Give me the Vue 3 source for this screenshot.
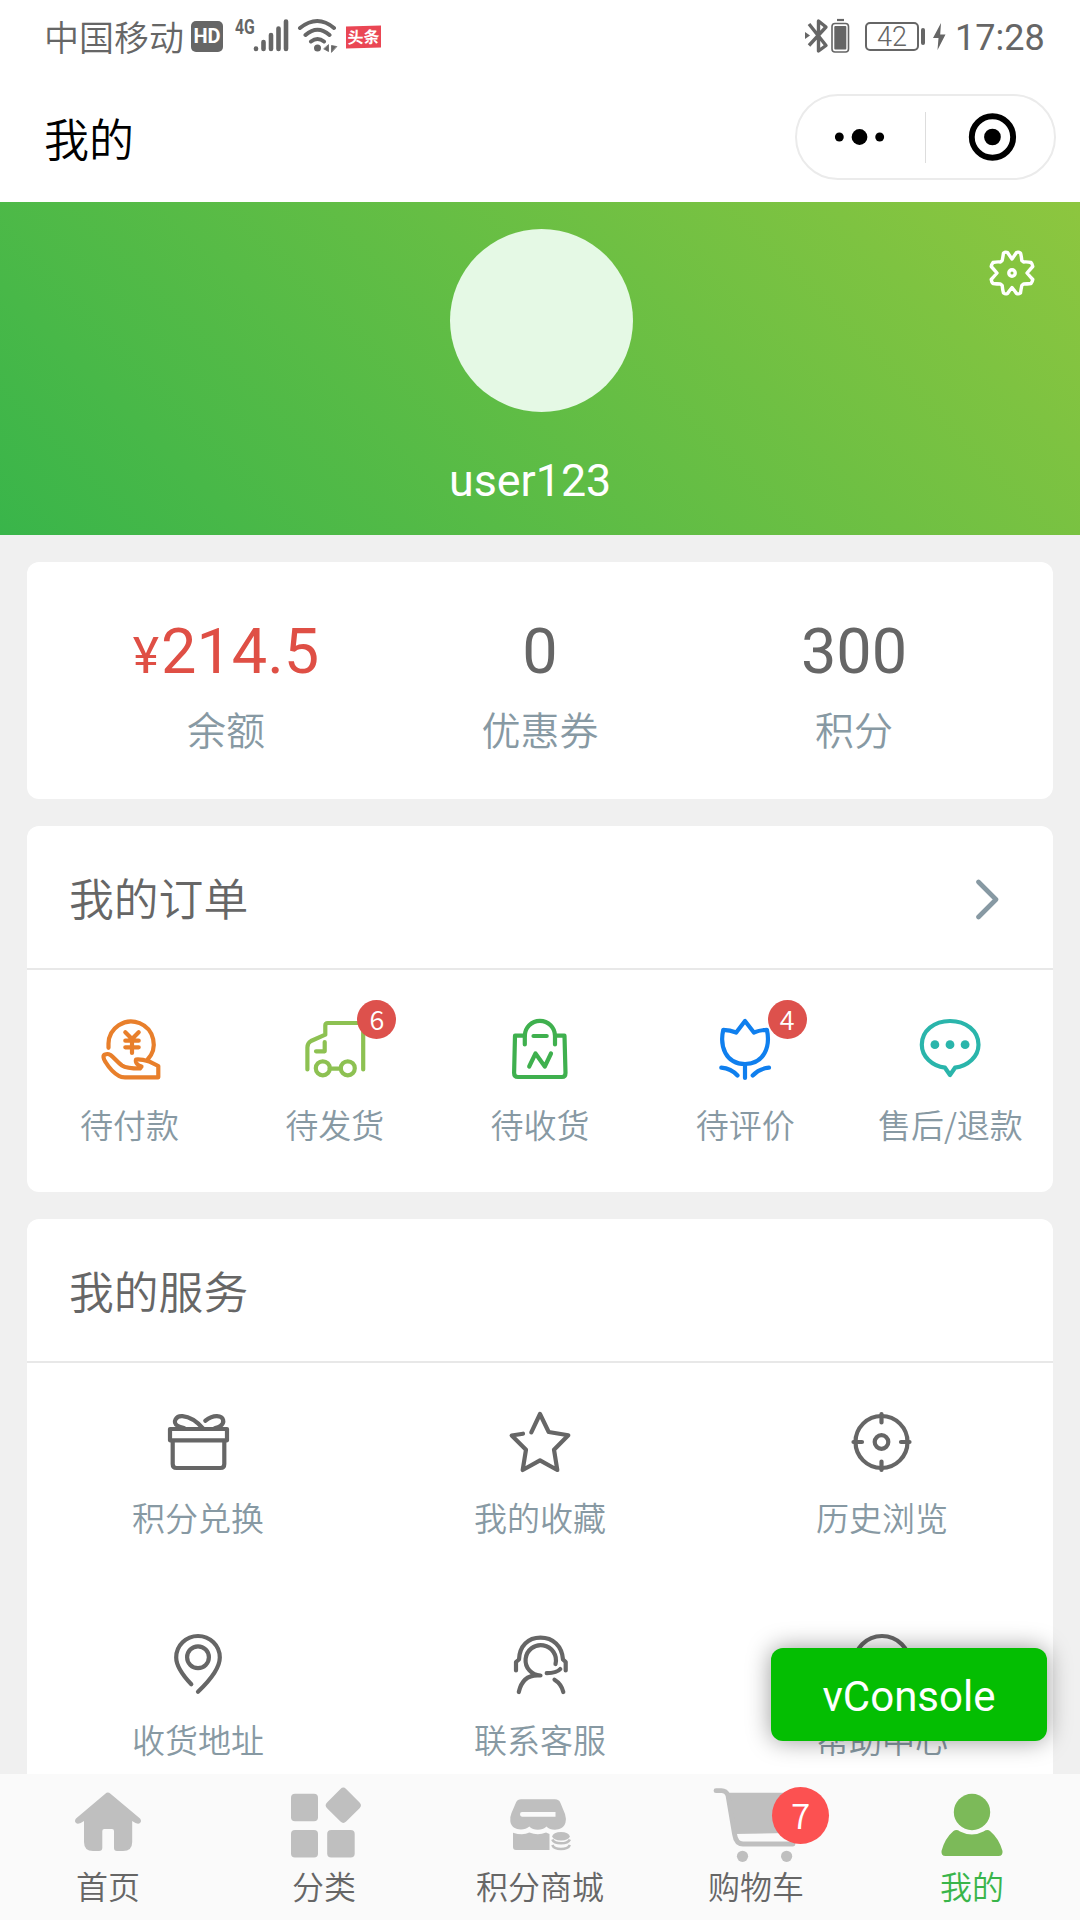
<script setup>
const stats = [
  { prefix: '¥', value: '214.5', label: '余额', red: true },
  { value: '0', label: '优惠券' },
  { value: '300', label: '积分' },
]

const orders = [
  {
    label: '待付款',
    color: '#e87f2b',
    paths: [
      'M14.5 34.8V30.6A22.6 22.6 0 1 1 53.6 46.5',
      'M31.3 19.3L38 26L44.7 19.3M31.3 27.7H44.7M31.3 34.3H44.7M38 26V40',
      'M11 41.6C8.500 42.500 9.500 46 11.500 49C15.500 55.500 20.500 60.500 25 63C27 64.300 28.500 64.300 31 64.300H64.300V53L56 48.800C50 47 45 46 42 46.600C41 50 44.500 52.500 47.500 53.500L46 55.500C38 55.500 31 54.500 28 52.500C23 49 20 44.500 16.500 42C14.500 40.800 12.500 40.800 11 41.600Z',
    ],
  },
  {
    label: '待发货',
    color: '#8dc152',
    badge: 6,
    paths: [
      'M8.400 56.500V34.500Q8.400 30 12 28L26.300 21.700V12.500Q26.300 10 28.800 10H64.200V56.500',
      'M17 38.300H25.700V29',
      'M30.800 55.600H41.400',
      'M30.800 55.300A7 7 0 1 1 16.800 55.300A7 7 0 1 1 30.800 55.300',
      'M55.800 55.300A7 7 0 1 1 41.800 55.300A7 7 0 1 1 55.800 55.300',
    ],
  },
  {
    label: '待收货',
    color: '#3fb04e',
    paths: [
      'M20.700 22.700H11L10.100 60Q10.100 64 14 64H58Q61.500 64 61.500 60L60.500 22.700H51',
      'M20.800 31.500V23A15.100 15.100 0 0 1 51 23V31.500',
      'M29.500 23H42.700',
      'M25.200 53.500L31.500 40.500L40.800 53.500L47 40.500',
    ],
  },
  {
    label: '待评价',
    color: '#0f7fee',
    badge: 4,
    paths: [
      'M36 8L27.200 19.500Q21 17 14.300 16.800C10.500 33 16.500 51 36 51S61.500 33 57.900 16.800Q51 17 44.900 19.500Z',
      'M36 51V65M12.300 54.700Q22 55.500 28.500 62.500M60 54.700Q50 55.500 43.700 62.500',
    ],
  },
  {
    label: '售后/退款',
    color: '#2ab5ab',
    paths: [
      'M31 54.700C18 53 7.800 43.500 7.800 31.700C7.800 18 20 8 36 8S64.500 18 64.500 31.700C64.500 43.500 54 53 41 54.700L36 62Z',
    ],
    dots: [20.9, 36, 51.1],
  },
]

const services = [
  {
    label: '积分兑换',
    paths: [
      'M8 23H65V34.300H8Z',
      'M10.700 35V58Q10.700 62 14.500 62H58.500Q62.300 62 62.300 58V35',
      'M41 22.500C34 14.500 27 10.800 20.500 10.200C14 9.600 10 16.500 15.500 19.800Q17.500 21 22 22',
      'M43.300 14.700C47 12 51 10 55 10.200C62 10.500 63 16.500 58.500 20Q56.500 21.500 53 22',
    ],
  },
  {
    label: '我的收藏',
    paths: [
      'M27.300 26.300L36 8L44.700 26L64.300 29.300L50 43.700L53.300 64L36 54.300L18.700 64L22 43.700L7.700 29.500L19 27.700',
    ],
  },
  {
    label: '历史浏览',
    paths: [
      'M61.500 36A26 26 0 1 1 9.500 36A26 26 0 1 1 61.500 36',
      'M42.300 36A6.800 6.800 0 1 1 28.700 36A6.800 6.800 0 1 1 42.300 36',
      'M35.500 8V16.500M35.500 55.500V64M7.500 36H16M55 36H63.500',
    ],
  },
  {
    label: '收货地址',
    paths: [
      'M29.300 56.300C20 46.500 14.200 37 14.200 29.500A21.800 21.500 0 0 1 57.800 29.500C57.800 39 51 49.500 36 63.700',
      'M46.900 29.200A10.900 10.900 0 1 1 25.100 29.200A10.900 10.900 0 1 1 46.900 29.200',
    ],
  },
  {
    label: '联系客服',
    paths: [
      'M12 42.500V34L15 31.500C15.500 18 24 9.700 36.500 9.700S58 18 59 31.500L61.700 34V42.500',
      'M51.500 36A15.200 15.200 0 1 0 36.500 47.500C23 46 17 54 14.800 64',
      'M42.700 45.200Q53 45 56.300 41M50.500 51.700Q57.500 56 59.300 64',
    ],
  },
  {
    label: '帮助中心',
    paths: [
      'M64 36A28 28 0 1 1 8 36A28 28 0 1 1 64 36',
      'M29 33A7 7 0 1 1 36 41V44M36 51V51.500',
    ],
  },
]
</script>

<template>
  <div class="page">
    <header class="status">
      <div class="status-left">
        <span class="carrier">中国移动</span>
        <span class="hd">HD</span>
        <span class="net">4G</span>
        <svg class="signal" width="38" height="36" viewBox="0 0 38 36" stroke="#666" stroke-width="4.600" stroke-linecap="round">
          <path d="M3 30.500V31M10.500 24V31M18 17V31M25.500 10.500V31M33 3.500V31" />
        </svg>
        <svg class="wifi" width="42" height="36" viewBox="0 0 42 36" fill="none" stroke="#666" stroke-width="4" stroke-linecap="round">
          <path d="M3 10Q20.500-4 37 10M8.500 17Q20.500 6.500 32.500 17M14 23.500Q20.500 18.500 27 23.500" />
          <circle cx="20.500" cy="30" r="3.500" fill="#666" stroke="none" />
          <path d="M31.500 27V33.500L27 31ZM34.500 34V27.500L39.500 28.500Z" fill="#666" stroke="#666" stroke-width="0.800" />
        </svg>
        <span class="news">头条</span>
      </div>
      <div class="status-right">
        <svg width="46" height="38" viewBox="0 0 46 38" fill="none" stroke="#666" stroke-width="3.400" stroke-linejoin="round">
          <path d="M4 7L21 28.500L13.500 34V4L21 10L4 28.500" />
          <path d="M0 15V22L5 18.500Z" fill="#666" stroke="none" />
          <rect x="27" y="6.500" width="16.500" height="28.500" rx="3" stroke-width="1.600" />
          <rect x="29.300" y="9" width="12" height="23.500" rx="1" fill="#666" stroke="none" />
          <path d="M32 3H39" stroke-width="2.200" />
        </svg>
        <span class="battery">42</span>
        <span class="battery-tip"></span>
        <svg class="bolt" width="13" height="28" viewBox="0 0 13 28" fill="#666"><path d="M8 0L0 15H5.500L4.500 27L12.500 11.500H7.200Z" /></svg>
        <span class="time">17:28</span>
      </div>
    </header>

    <div class="navbar">
      <h1>我的</h1>
      <div class="capsule">
        <svg class="half" width="130" height="54" viewBox="0 0 130 54">
          <circle cx="43" cy="27" r="4.500" /><circle cx="63.500" cy="27" r="8" /><circle cx="84" cy="27" r="4.500" />
        </svg>
        <i></i>
        <svg class="half" width="130" height="54" viewBox="0 0 130 54">
          <circle cx="67.500" cy="27" r="21" fill="none" stroke="#000" stroke-width="6" /><circle cx="67.500" cy="27" r="8.500" />
        </svg>
      </div>
    </div>

    <section class="hero">
      <div class="profile">
        <div class="avatar"></div>
        <div class="name">user123</div>
      </div>
      <svg class="gear" width="52" height="52" viewBox="-26 -26 52 52" fill="none" stroke="#fff" stroke-width="3.400" stroke-linejoin="round">
        <path d="M-4.500-20.500Q-6.500-21.500-8.500-20Q-9-16.500-9.800-12.500L-11.500-11Q-15-11.500-19-10.500Q-20.500-8.500-20.800-6.500Q-18-3.500-15 0Q-18 3.500-20.800 6.500Q-20.500 9-19 10.500Q-15 11-11.500 11L-9.800 12.500Q-9.500 16.500-8.500 20Q-6.500 21.500-4.500 20.500Q-2.500 17.500 0 14.500Q2.500 17.500 4.500 20.500Q6.500 21.500 8.500 20Q9 16.500 9.800 12.500L11.500 11Q15 11 19 10.500Q20.500 8.500 20.800 6.500Q18 3.500 15 0Q18-3.500 20.800-6.500Q20.500-9 19-10.500Q15-11.500 11.500-11L9.800-12.500Q9.500-16.500 8.500-20Q6.500-21.500 4.500-20.500Q2.500-17.500 0-14Q-2.500-17.500-4.500-20.500Z" />
        <circle r="3.200" />
      </svg>
    </section>

    <main>
      <section class="card stats">
        <div v-for="s in stats" :key="s.label" class="stat">
          <div class="value" :class="{ red: s.red }"><small v-if="s.prefix">{{ s.prefix }}</small>{{ s.value }}</div>
          <div class="stat-label">{{ s.label }}</div>
        </div>
      </section>

      <section class="card">
        <div class="card-head">
          <h2>我的订单</h2>
          <svg width="26" height="42" viewBox="0 0 26 42" fill="none" stroke="#8799a3" stroke-width="4.600" stroke-linecap="round" stroke-linejoin="round"><path d="M3.500 4L21 21.500L3.500 39" /></svg>
        </div>
        <div class="orders">
          <div v-for="o in orders" :key="o.label" class="cell">
            <div class="icon">
              <svg width="72" height="72" viewBox="0 0 72 72" fill="none" :stroke="o.color" stroke-width="4.200" stroke-linecap="round" stroke-linejoin="round">
                <path v-for="d in o.paths" :key="d" :d="d" />
                <circle v-for="x in o.dots" :key="x" :cx="x" cy="31.700" r="4.400" :fill="o.color" stroke="none" />
              </svg>
              <span v-if="o.badge" class="badge">{{ o.badge }}</span>
            </div>
            <div class="label">{{ o.label }}</div>
          </div>
        </div>
      </section>

      <section class="card">
        <div class="card-head"><h2>我的服务</h2></div>
        <div class="services">
          <div v-for="s in services" :key="s.label" class="cell">
            <svg width="72" height="72" viewBox="0 0 72 72" fill="none" stroke="#666" stroke-width="4.200" stroke-linecap="round" stroke-linejoin="round">
              <path v-for="d in s.paths" :key="d" :d="d" />
            </svg>
            <div class="label">{{ s.label }}</div>
          </div>
        </div>
      </section>
    </main>

    <button class="vconsole">vConsole</button>

    <nav class="tabbar">
      <div class="tab">
        <svg width="100" height="84" viewBox="0 0 100 84">
          <path d="M47.300 13.700Q49.800 11.500 52.500 13.700L82 38.500Q84 41 82 43Q79.500 45 74.200 41V62Q74.200 71 65 71H59Q56 71 56 68V51Q56 49 54 49H46.300Q44.300 49 44.300 51V68Q44.300 71 41 71H35Q26 71 26 62V41Q20.500 45 18 43Q16 41 18 38.500Z" />
        </svg>
        <span>首页</span>
      </div>
      <div class="tab">
        <svg width="100" height="84" viewBox="0 0 100 84">
          <rect x="17" y="13.700" width="27" height="27.600" rx="4" />
          <rect x="17" y="50" width="27" height="27.600" rx="4" />
          <rect x="53.200" y="50" width="27.500" height="27.600" rx="4" />
          <rect x="55.800" y="11.800" width="27" height="27" rx="4" transform="rotate(45 69.300 25.300)" />
        </svg>
        <span>分类</span>
      </div>
      <div class="tab">
        <svg width="100" height="84" viewBox="0 0 100 84">
          <path fill-rule="evenodd" d="M31 19.300H65Q69 19.300 70.500 23L75 34Q76.500 39 75.500 42.500C73.500 51 61 51.500 56.500 46.500C52 50.800 43.500 50.800 39.300 46.500C34 51.500 21 50.500 20.300 41Q19.800 37 21.500 33L26 22.500Q27.500 19.300 31 19.300ZM32 32Q30 32 30 34.300T32 36.700H65.500V32Z" />
          <path d="M23 52.700Q33 56 39.300 52.500Q48 56 56 52.500L59.500 54V70H26Q23 70 23 67Z" />
          <ellipse cx="71" cy="56.200" rx="8.700" ry="4.300" />
          <path d="M62.300 59.500Q64 63.300 71 63.300T79.900 59.500M62.300 65Q64 69 71 69T79.900 65" fill="none" stroke="#bfbfbf" stroke-width="2.600" />
        </svg>
        <span>积分商城</span>
      </div>
      <div class="tab">
        <div class="icon">
          <svg width="100" height="84" viewBox="0 0 100 84">
            <path d="M22 12.700H88L81 53L28 54Z" />
            <path d="M10 10.700H15.500Q20 10.700 22 15.500L28.500 54Q30 64 37 64H87" fill="none" stroke="#bfbfbf" stroke-width="4.800" stroke-linecap="round" />
            <circle cx="36.500" cy="76.300" r="5.600" /><circle cx="80.600" cy="76.300" r="5.600" />
          </svg>
          <span class="cart-badge">7</span>
        </div>
        <span>购物车</span>
      </div>
      <div class="tab active">
        <svg width="100" height="84" viewBox="0 0 100 84">
          <circle cx="50" cy="32" r="18.200" />
          <path d="M31.500 51Q34.500 49 38 51.500Q50 57.500 61.500 51.500Q65.500 49 68 51Q77 58.500 80.500 71Q81 76 76.500 76H23.500Q19 76 19.500 71Q23 58 31.500 51Z" />
        </svg>
        <span>我的</span>
      </div>
    </nav>
  </div>
</template>

<style>
body {
  margin: 0;
}
</style>

<style scoped>
.page {
  position: relative;
  display: flex;
  flex-direction: column;
  width: 1080px;
  height: 1920px;
  overflow: hidden;
  background: #f0f0f0;
  color: #666;
  font-family: "Noto Sans CJK SC", sans-serif;
  font-weight: 350;
}
.page * {
  box-sizing: border-box;
}
svg {
  display: block;
  flex: none;
}
h1, h2 {
  margin: 0;
  font-weight: inherit;
}
.status {
  flex: none;
  display: flex;
  justify-content: space-between;
  height: 72px;
  padding: 0 37px 0 44px;
  background: #fff;
}
.status-left, .status-right {
  display: flex;
  align-items: center;
}
.carrier {
  width: 142px;
  font-size: 35px;
  line-height: 72px;
  white-space: nowrap;
}
.hd {
  width: 32px;
  height: 31px;
  margin: 1px 0 0 5px;
  border-radius: 5px;
  background: #666;
  color: #fff;
  font: bold 20px/31px Roboto, sans-serif;
  text-align: center;
}
.net {
  width: 19px;
  margin: 0 0 19px 12px;
  font: bold 21px/18px Roboto, sans-serif;
  transform: scaleX(.75);
  transform-origin: left;
}
.signal {
  margin-left: -1px;
}
.wifi {
  margin-left: 6px;
}
.news {
  width: 35px;
  height: 22px;
  margin: 1px 0 0 7px;
  background: #ea4654;
  color: #fff;
  font: bold 16px/21px "Noto Sans CJK SC", sans-serif;
  text-align: center;
  transform: skewY(-1.500deg);
}
.battery {
  width: 54px;
  height: 29px;
  margin: 1px 0 0 14px;
  border: 2px solid #666;
  border-radius: 5px;
  font: 350 27px/26px Roboto, sans-serif;
  text-align: center;
}
.battery-tip {
  width: 4px;
  height: 17px;
  margin: 1px 0 0 2px;
  border-radius: 2px;
  background: #666;
}
.bolt {
  margin: 2px 0 0 8px;
}
.time {
  width: 88px;
  margin: 3px 0 0 9px;
  font: 400 36px/44px Roboto, sans-serif;
}
.navbar {
  flex: none;
  display: flex;
  justify-content: space-between;
  align-items: center;
  height: 130px;
  padding: 0 24px 0 44px;
  background: #fff;
  color: #000;
}
h1 {
  padding-top: 2px;
  font-size: 45px;
  line-height: 56px;
}
.capsule {
  display: flex;
  align-items: center;
  width: 261px;
  height: 86px;
  border: 2px solid #ebebeb;
  border-radius: 43px;
}
.capsule .half {
  flex: 1;
  width: 128px;
}
.capsule i {
  width: 1px;
  height: 51px;
  background: #ddd;
}
.hero {
  position: relative;
  flex: none;
  display: flex;
  justify-content: center;
  height: 333px;
  padding-top: 27px;
  background: linear-gradient(45deg, #39b54a, #8dc63f);
}
.profile {
  width: 183px;
  margin-left: 3px;
}
.avatar {
  width: 183px;
  height: 183px;
  border-radius: 50%;
  background: #e5f9e5;
}
.name {
  margin-top: 42px;
  margin-left: -1px;
  color: #fff;
  font: 400 44.800px/54px Roboto, sans-serif;
}
.gear {
  position: absolute;
  top: 45px;
  right: 42px;
}
main {
  flex: 1;
  min-height: 0;
  overflow: hidden;
  display: flex;
  flex-direction: column;
  gap: 27px;
  padding: 27px;
}
.card {
  flex: none;
  border-radius: 12px;
  background: #fff;
}
.stats {
  display: flex;
  height: 237px;
  padding: 50px 42px 0;
}
.stat {
  flex: 1;
  text-align: center;
}
.value {
  height: 80px;
  font: 400 63px/80px Roboto, sans-serif;
}
.value small {
  margin-right: 2px;
  font-size: 50px;
  line-height: 1;
}
.red {
  color: #df4f45;
}
.stat-label {
  margin-top: 8px;
  color: #8799a3;
  font-size: 39px;
  line-height: 56px;
}
.card-head {
  display: flex;
  justify-content: space-between;
  align-items: center;
  height: 144px;
  padding: 4px 52px 0 42px;
  border-bottom: 2px solid #e8e8e8;
}
h2 {
  padding-bottom: 4px;
  font-size: 44.800px;
  line-height: 64px;
}
.orders {
  display: flex;
  height: 222px;
  padding-top: 43px;
}
.orders .cell {
  flex: 1;
}
.cell {
  display: flex;
  flex-direction: column;
  align-items: center;
}
.icon {
  position: relative;
}
.badge {
  position: absolute;
  left: 58.500px;
  top: -13px;
  width: 39px;
  height: 39px;
  border-radius: 50%;
  background: #dd514c;
  color: #fff;
  font: 350 27px/37px "Noto Sans CJK SC", sans-serif;
  text-align: center;
}
.label {
  margin-top: 15px;
  color: #8799a3;
  font-size: 33px;
  line-height: 48px;
  white-space: nowrap;
}
.services {
  display: grid;
  grid-template-columns: repeat(3, 1fr);
  grid-auto-rows: 222px;
  padding-top: 43px;
}
.vconsole {
  position: absolute;
  left: 771px;
  top: 1648px;
  width: 276px;
  height: 93px;
  padding: 0;
  border: 0;
  border-radius: 12px;
  background: #04be02;
  box-shadow: 0 0 24px rgba(0, 0, 0, .4);
  color: #fff;
  font: 400 42px/97px Roboto, sans-serif;
}
.tabbar {
  position: relative;
  flex: none;
  display: flex;
  height: 146px;
  padding-top: 6px;
  background: #fafafa;
}
.tab {
  flex: 1;
  display: flex;
  flex-direction: column;
  align-items: center;
  fill: #bfbfbf;
  font-size: 32px;
  line-height: 43px;
}
.active {
  fill: #7cba59;
  color: #39b54a;
}
.cart-badge {
  position: absolute;
  left: 66px;
  top: 7px;
  width: 57px;
  height: 57px;
  border-radius: 50%;
  background: #fc5151;
  color: #fff;
  font: 350 35px/53px "Noto Sans CJK SC", sans-serif;
  text-align: center;
}
</style>
